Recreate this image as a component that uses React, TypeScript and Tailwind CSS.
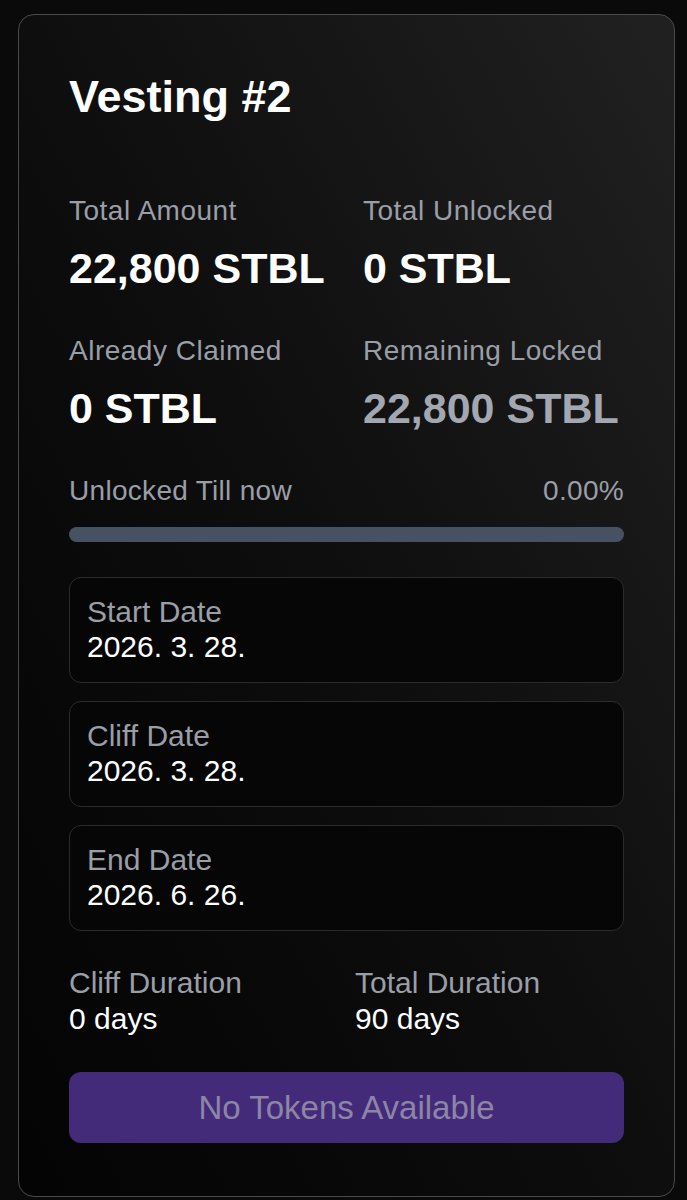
import React from "react";

const font = { fontFamily: '"Liberation Sans", Arial, sans-serif' };

function Stat({ label, value, muted }: { label: string; value: string; muted?: boolean }) {
  return (
    <div className="flex flex-col">
      <span className="text-[28px] leading-[34px] text-[#9a9ea7] tracking-[0.5px]">{label}</span>
      <span
        className={
          "mt-[15px] text-[43px] leading-[50px] font-semibold " +
          (muted ? "text-[#a2a7b2]" : "text-white")
        }
      >
        {value}
      </span>
    </div>
  );
}

function DateBox({ label, value }: { label: string; value: string }) {
  return (
    <div className="h-[106px] rounded-[12px] border border-[#2b2b2b] bg-[#060606] px-[17px] pt-[17px]">
      <div className="text-[30px] leading-[34px] text-[#9a9ea7]">{label}</div>
      <div className="mt-[1px] text-[30px] leading-[34px] text-white">{value}</div>
    </div>
  );
}

export default function App() {
  return (
    <div className="h-[1200px] w-full bg-[#0a0a0a] pt-[14px] pl-[18px]" style={font}>
      <div className="w-[657px] rounded-[16px] border border-[#4a4a4a] bg-linear-to-bl from-[#212121] via-[#0e0e0e] to-[#040404] px-[50px] pt-[56px] pb-[53px]">
        {/* Title */}
        <h1 className="text-[45px] leading-[52px] font-bold text-white">Vesting #2</h1>

        {/* Amount stats */}
        <div className="mt-[71px] grid grid-cols-[294px_1fr]">
          <Stat label="Total Amount" value="22,800 STBL" />
          <Stat label="Total Unlocked" value="0 STBL" />
        </div>
        <div className="mt-[41px] grid grid-cols-[294px_1fr]">
          <Stat label="Already Claimed" value="0 STBL" />
          <Stat label="Remaining Locked" value="22,800 STBL" muted />
        </div>

        {/* Progress */}
        <div className="mt-[41px] flex items-center justify-between text-[28px] leading-[34px] text-[#9a9ea7] tracking-[0.3px]">
          <span>Unlocked Till now</span>
          <span>0.00%</span>
        </div>
        <div className="mt-[19px] h-[15px] w-full rounded-full bg-[#465264]" />

        {/* Dates */}
        <div className="mt-[35px] flex flex-col gap-[18px]">
          <DateBox label="Start Date" value="2026. 3. 28." />
          <DateBox label="Cliff Date" value="2026. 3. 28." />
          <DateBox label="End Date" value="2026. 6. 26." />
        </div>

        {/* Durations */}
        <div className="mt-[35px] grid grid-cols-[286px_1fr]">
          <div className="flex flex-col">
            <span className="text-[30px] leading-[34px] text-[#9a9ea7]">Cliff Duration</span>
            <span className="mt-[2px] text-[30px] leading-[34px] text-white">0 days</span>
          </div>
          <div className="flex flex-col">
            <span className="text-[30px] leading-[34px] text-[#9a9ea7]">Total Duration</span>
            <span className="mt-[2px] text-[30px] leading-[34px] text-white">90 days</span>
          </div>
        </div>

        {/* Claim button */}
        <button
          disabled
          className="mt-[36px] flex h-[71px] w-full items-center justify-center rounded-[12px] bg-[#432b7a] text-[33px] text-[#8d85a6]"
        >
          No Tokens Available
        </button>
      </div>
    </div>
  );
}
